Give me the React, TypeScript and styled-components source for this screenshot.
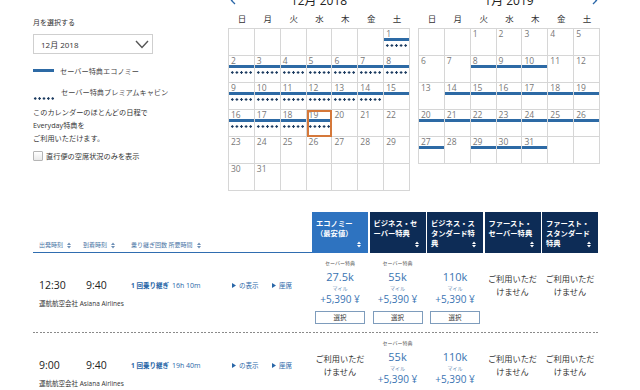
import styled, { createGlobalStyle } from "styled-components";

const GlobalStyle = createGlobalStyle`
  html, body {
    margin: 0;
    padding: 0;
    background: #fff;
  }
  body {
    font-family: "Open Sans", "Noto Sans CJK JP", sans-serif;
    color: #333;
    overflow: hidden;
  }
  * {
    box-sizing: border-box;
  }
`;

const Page = styled.div`
  width: 640px;
  height: 390px;
  overflow: hidden;
`;

const Top = styled.div`
  display: flex;
  align-items: flex-start;
`;

/* ---------- left filter panel ---------- */

const Side = styled.aside`
  width: 228px;
  padding: 17px 0 0 33px;
  display: flex;
  flex-direction: column;
`;

const FieldLabel = styled.div`
  font-size: 7px;
  line-height: 12px;
  color: #333;
`;

const Select = styled.div`
  margin-top: 5px;
  width: 120px;
  height: 20px;
  border: 1px solid #cfcfcf;
  display: flex;
  align-items: center;
  justify-content: space-between;
  padding: 0 3px 0 7px;
  font-size: 8px;
  color: #333;
`;

const Legend = styled.div<{ $gap: number }>`
  margin-top: ${(p) => p.$gap}px;
  display: flex;
  align-items: flex-start;
  gap: 6px;
  font-size: 7.2px;
  line-height: 12px;
  color: #444;
`;

const LegendBar = styled.span`
  width: 21px;
  height: 3px;
  margin-top: 4px;
  background: #2d6aa5;
`;

const LegendDots = styled.span`
  width: 22px;
  height: 3px;
  margin-top: 11px;
  background-image: radial-gradient(circle, #1c3b60 1px, transparent 1.4px);
  background-size: 4.4px 3px;
`;

const Note = styled.p`
  margin: 6px 0 0;
  font-size: 7.2px;
  line-height: 13px;
  color: #333;
`;

const CheckRow = styled.label`
  margin-top: 6px;
  display: flex;
  align-items: center;
  gap: 3px;
  font-size: 7.2px;
  line-height: 10px;
  color: #333;
`;

const CheckBox = styled.span`
  width: 10px;
  height: 10px;
  border: 1px solid #b5b5b5;
  border-radius: 1px;
  background: linear-gradient(#fff, #e9e9e9);
`;

/* ---------- calendars ---------- */

const Calendars = styled.div`
  display: flex;
  gap: 8px;
  margin-top: -9px;
`;

const Month = styled.section`
  width: 182px;
`;

const MonthHead = styled.div`
  height: 16px;
  display: grid;
  grid-template-columns: 10px 1fr 10px;
  align-items: center;
  font-size: 12px;
  color: #222;
  text-align: center;
`;

const DayNames = styled.div`
  height: 21px;
  display: grid;
  grid-template-columns: repeat(7, 1fr);
  align-items: center;
  text-align: center;
  font-size: 8.5px;
  color: #333;
  padding-left: 1px;
`;

const Grid = styled.div`
  display: grid;
  grid-template-columns: repeat(7, 1fr);
  border-top: 1px solid #d6d6d6;
  border-left: 1px solid #d6d6d6;
`;

const Cell = styled.div<{ $today?: boolean }>`
  height: 27px;
  border-right: 1px solid #d6d6d6;
  border-bottom: 1px solid #d6d6d6;
  display: flex;
  flex-direction: column;
  outline: ${(p) => (p.$today ? "2px solid #d5783a" : "none")};
  outline-offset: -2px;
`;

const DayNum = styled.span`
  height: 9px;
  padding-left: 2px;
  font-size: 8.5px;
  line-height: 10px;
  color: #777;
`;

const DayBar = styled.span<{ $on?: boolean }>`
  height: 3px;
  background: ${(p) => (p.$on ? "#2d6aa5" : "transparent")};
`;

const DayDots = styled.span<{ $on?: boolean }>`
  margin: 3px 0 0 1px;
  height: 3px;
  width: 23px;
  background-image: ${(p) =>
    p.$on ? "radial-gradient(circle, #1c3b60 1px, transparent 1.4px)" : "none"};
  background-size: 4.6px 3px;
`;

/* ---------- results table ---------- */

const Table = styled.div`
  margin: 21px 0 0 33px;
  width: 565px;
`;

const HeadRow = styled.div`
  display: flex;
  align-items: flex-end;
`;

const SortHead = styled.div`
  width: 279px;
  display: flex;
  padding: 0 0 1px 6px;
  border-bottom: 1px solid #2f6db0;
  font-size: 6px;
  line-height: 12px;
  color: #4b76a6;
`;

const SortLabel = styled.span<{ $w: number }>`
  width: ${(p) => p.$w}px;
  display: flex;
  align-items: center;
  gap: 4px;
`;

const FareCols = styled.div`
  display: grid;
  grid-template-columns: repeat(5, 56px);
  column-gap: 1.5px;
`;

const FareHead = styled.div<{ $primary?: boolean }>`
  position: relative;
  height: 41px;
  padding: 6px 0 0 4px;
  background: ${(p) => (p.$primary ? "#2e73c0" : "#0d2c56")};
  color: #fff;
  font-size: 7.3px;
  font-weight: 700;
  line-height: 10px;
  white-space: nowrap;
`;

const HeadSort = styled.span`
  position: absolute;
  right: 7px;
  bottom: 5px;
  display: flex;
`;

const Row = styled.div`
  display: flex;
  height: 80px;
  background-image: repeating-linear-gradient(to right, #8a8a8a 0 2px, transparent 2px 3.5px);
  background-size: 100% 1px;
  background-position: left bottom;
  background-repeat: no-repeat;
`;

const FlightInfo = styled.div`
  width: 279px;
  padding: 25px 0 0 6px;
`;

const TimeLine = styled.div`
  height: 14px;
  display: grid;
  grid-template-columns: 47px 45px 101px 40px auto;
  align-items: center;
  color: #2a67a8;
  font-size: 6.5px;
`;

const Time = styled.span`
  font-size: 10.5px;
  color: #222;
`;

const Transfer = styled.span`
  font-weight: 700;
  font-size: 6.5px;
`;

const Duration = styled.span`
  font-size: 7px;
  margin-left: 3px;
`;

const LinkText = styled.span`
  display: flex;
  align-items: center;
  gap: 3px;
`;

const Airline = styled.div`
  margin-top: 7px;
  font-size: 6.5px;
  line-height: 10px;
  color: #333;
`;

const FareCell = styled.div`
  display: flex;
  flex-direction: column;
  align-items: center;
  padding-top: 5px;
`;

const FareType = styled.span`
  height: 10px;
  font-size: 5px;
  line-height: 10px;
  color: #555;
`;

const Miles = styled.span`
  margin-top: 2px;
  font-size: 11px;
  line-height: 14px;
  color: #3a74b2;
`;

const MileUnit = styled.span`
  font-size: 5px;
  line-height: 8px;
  color: #6a8db5;
`;

const Price = styled.span`
  font-size: 10px;
  line-height: 14px;
  color: #3a74b2;
`;

const SelectButton = styled.button`
  margin-top: 5px;
  width: 50px;
  height: 13px;
  padding: 0;
  border: 1px solid #7e9cbc;
  border-radius: 0;
  background: #fff;
  font-family: inherit;
  font-size: 6.5px;
  line-height: 11px;
  color: #333;
`;

const Unavailable = styled.span`
  margin-top: 14px;
  font-size: 8.2px;
  line-height: 13px;
  color: #333;
  text-align: center;
`;

/* ---------- small drawings ---------- */

function SortIcon({ color }: { color: string }) {
  return (
    <svg width="4" height="7" viewBox="0 0 4 7">
      <polygon points="0,3 2,0.5 4,3" fill={color} />
      <polygon points="0,4 2,6.5 4,4" fill={color} />
    </svg>
  );
}

function Chevron({ dir }: { dir: "left" | "right" | "down" }) {
  if (dir === "down") {
    return (
      <svg width="14" height="9" viewBox="0 0 14 9">
        <polyline points="1,1 7,7.5 13,1" fill="none" stroke="#555" strokeWidth="1.4" />
      </svg>
    );
  }
  const pts = dir === "left" ? "5,1 1.5,4.5 5,8" : "1,1 4.5,4.5 1,8";
  return (
    <svg width="6" height="9" viewBox="0 0 6 9">
      <polyline points={pts} fill="none" stroke="#2a67a8" strokeWidth="1.3" />
    </svg>
  );
}

function Play() {
  return (
    <svg width="4" height="5" viewBox="0 0 4 5">
      <polygon points="0,0 4,2.5 0,5" fill="#2a67a8" />
    </svg>
  );
}

/* ---------- data ---------- */

const DAY_NAMES = ["日", "月", "火", "水", "木", "金", "土"];

type Day = { n?: number; bar?: boolean; dots?: boolean; today?: boolean };

function buildMonth(
  lead: number,
  days: number,
  bar: (d: number) => boolean,
  dots: (d: number) => boolean,
  today?: number
): Day[] {
  const cells: Day[] = [];
  for (let i = 0; i < lead; i++) cells.push({});
  for (let d = 1; d <= days; d++) {
    cells.push({ n: d, bar: bar(d), dots: dots(d), today: d === today });
  }
  while (cells.length % 7) cells.push({});
  return cells;
}

const DEC = buildMonth(
  6,
  31,
  (d) => d <= 19,
  (d) => d <= 19 && d !== 15,
  19
);

const JAN_BARS = [8, 9, 10, 14, 15, 16, 17, 18, 19, 20, 21, 22, 23, 24, 25, 26, 27, 29, 30, 31];
const JAN = buildMonth(
  2,
  31,
  (d) => JAN_BARS.includes(d),
  () => false
);

const FARE_HEADS = [
  ["エコノミー", "（最安値）"],
  ["ビジネス・セ", "ーバー特典"],
  ["ビジネス・ス", "タンダード特", "典"],
  ["ファースト・", "セーバー特典"],
  ["ファースト・", "スタンダード", "特典"],
];

type Fare = { saver?: boolean; miles?: string } | null;

const FLIGHTS: { dep: string; arr: string; duration: string; fares: Fare[] }[] = [
  {
    dep: "12:30",
    arr: "9:40",
    duration: "16h 10m",
    fares: [
      { saver: true, miles: "27.5k" },
      { saver: true, miles: "55k" },
      { miles: "110k" },
      null,
      null,
    ],
  },
  {
    dep: "9:00",
    arr: "9:40",
    duration: "19h 40m",
    fares: [null, { saver: true, miles: "55k" }, { miles: "110k" }, null, null],
  },
];

/* ---------- components ---------- */

function Calendar({ title, cells, nav }: { title: string; cells: Day[]; nav: "left" | "right" }) {
  return (
    <Month>
      <MonthHead>
        <span>{nav === "left" && <Chevron dir="left" />}</span>
        <span>{title}</span>
        <span>{nav === "right" && <Chevron dir="right" />}</span>
      </MonthHead>
      <DayNames>
        {DAY_NAMES.map((d) => (
          <span key={d}>{d}</span>
        ))}
      </DayNames>
      <Grid>
        {cells.map((c, i) => (
          <Cell key={i} $today={c.today}>
            <DayNum>{c.n}</DayNum>
            <DayBar $on={c.bar} />
            <DayDots $on={c.dots} />
          </Cell>
        ))}
      </Grid>
    </Month>
  );
}

function FareBox({ fare }: { fare: Fare }) {
  if (!fare) {
    return (
      <FareCell>
        <Unavailable>
          ご利用いただ
          <br />
          けません
        </Unavailable>
      </FareCell>
    );
  }
  return (
    <FareCell>
      <FareType>{fare.saver ? "セーバー特典" : ""}</FareType>
      <Miles>{fare.miles}</Miles>
      <MileUnit>マイル</MileUnit>
      <Price>+5,390 ¥</Price>
      <SelectButton>選択</SelectButton>
    </FareCell>
  );
}

export default function App() {
  return (
    <Page>
      <GlobalStyle />
      <Top>
        <Side>
          <FieldLabel>月を選択する</FieldLabel>
          <Select>
            <span>12月 2018</span>
            <Chevron dir="down" />
          </Select>
          <Legend $gap={11}>
            <LegendBar />
            <span>セーバー特典エコノミー</span>
          </Legend>
          <Legend $gap={9}>
            <LegendDots />
            <span>セーバー特典プレミアムキャビン</span>
          </Legend>
          <Note>
            このカレンダーのほとんどの日程で
            <br />
            Everyday特典を
            <br />
            ご利用いただけます。
          </Note>
          <CheckRow>
            <CheckBox />
            <span>直行便の空席状況のみを表示</span>
          </CheckRow>
        </Side>
        <Calendars>
          <Calendar title="12月 2018" cells={DEC} nav="left" />
          <Calendar title="1月 2019" cells={JAN} nav="right" />
        </Calendars>
      </Top>

      <Table>
        <HeadRow>
          <SortHead>
            <SortLabel $w={44}>
              出発時刻 <SortIcon color="#6d8fb5" />
            </SortLabel>
            <SortLabel $w={48}>
              到着時刻 <SortIcon color="#6d8fb5" />
            </SortLabel>
            <SortLabel $w={120}>
              乗り継ぎ回数 所要時間 <SortIcon color="#6d8fb5" />
            </SortLabel>
          </SortHead>
          <FareCols>
            {FARE_HEADS.map((lines, i) => (
              <FareHead key={i} $primary={i === 0}>
                {lines.map((l) => (
                  <div key={l}>{l}</div>
                ))}
                <HeadSort>
                  <SortIcon color="#fff" />
                </HeadSort>
              </FareHead>
            ))}
          </FareCols>
        </HeadRow>

        {FLIGHTS.map((f) => (
          <Row key={f.dep}>
            <FlightInfo>
              <TimeLine>
                <Time>{f.dep}</Time>
                <Time>{f.arr}</Time>
                <span>
                  <Transfer>1 回乗り継ぎ</Transfer>
                  <Duration>{f.duration}</Duration>
                </span>
                <LinkText>
                  <Play /> の表示
                </LinkText>
                <LinkText>
                  <Play /> 座席
                </LinkText>
              </TimeLine>
              <Airline>運航航空会社 Asiana Airlines</Airline>
            </FlightInfo>
            <FareCols>
              {f.fares.map((fare, i) => (
                <FareBox key={i} fare={fare} />
              ))}
            </FareCols>
          </Row>
        ))}
      </Table>
    </Page>
  );
}
